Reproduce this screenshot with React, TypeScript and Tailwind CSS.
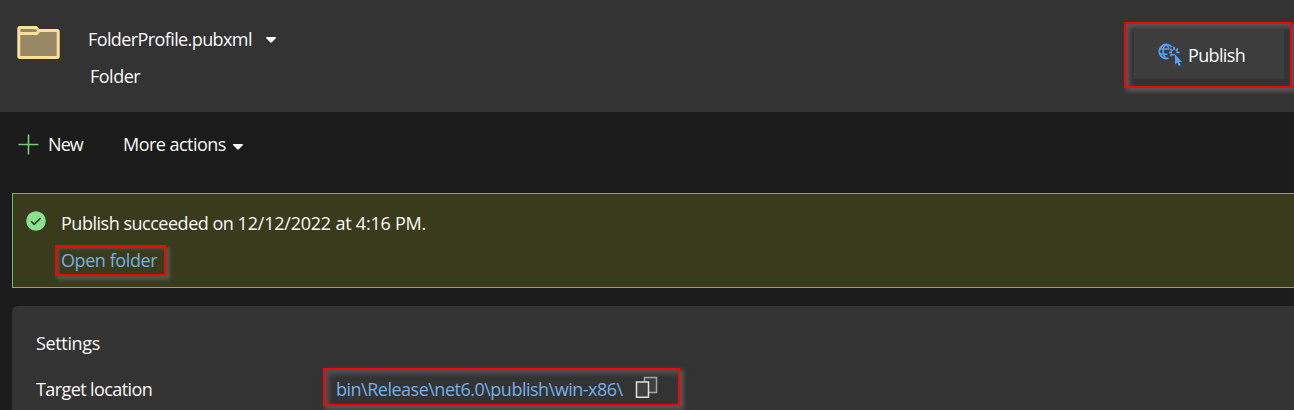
import type { ReactNode } from "react";

function Caret({ className = "" }: { className?: string }) {
  return (
    <svg className={`shrink-0 ${className}`} width="10" height="6" viewBox="0 0 10 6" fill="#fff">
      <path d="M0 0h10v1L5.6 5.6h-1.2L0 1z" />
    </svg>
  );
}

function FolderIcon() {
  return (
    <svg className="mt-[25px] ml-[17px] shrink-0" width="43" height="35" viewBox="0 0 43 35" fill="none">
      <path d="M3 2.5h16l3 3h18a1.2 1.2 0 0 1 1.2 1.2v24.6a1.2 1.2 0 0 1-1.2 1.2H3a1.2 1.2 0 0 1-1.2-1.2V3.7A1.2 1.2 0 0 1 3 2.5z" fill="#988866" stroke="#ffe09b" strokeWidth="3" />
      <path d="M2 8.5h17.5l3-3" stroke="#ffe09b" strokeWidth="3" />
    </svg>
  );
}

function GlobeCursorIcon() {
  return (
    <svg className="shrink-0" width="24" height="24" viewBox="0 0 24 24" fill="none" stroke="#55a3f4" strokeWidth="1.5">
      <path d="M13.8 4A7 7 0 1 0 10.500 15.200" strokeWidth="1.9" />
      <path d="M8 1.500C5.900 3.200 5 5.600 5 8.500s.9 5.300 3 7M8 1.500c1.500 1 2.400 2.400 2.900 4M1.500 6h10M1.500 11.200h8" />
      <path d="M16 3.800v3M16 11v1.500M11 9.400h3M18.400 9.400h3.200M12.400 5.800l2 2M19.900 5.800l-2.100 2M12.400 13l2-2" strokeWidth="1.900" />
      <path d="M17 11.300v10.200l2.200-2 1.500 3.500 1.900-.8-1.500-3.300h2.900z" fill="#55a3f4" stroke="none" />
    </svg>
  );
}

function CopyIcon() {
  return (
    <svg className="ml-[11px] mt-[-1px] shrink-0" width="24" height="24" viewBox="0 0 24 24" fill="none">
      <path d="M9.500 1.500h12v15h-12z" fill="#3f3f3f" stroke="#a5a5a5" strokeWidth="1.500" />
      <path d="M1.500 6h12v15.200h-12z" fill="#404040" stroke="#e0e0e0" strokeWidth="1.500" />
    </svg>
  );
}

function Highlight({ className, children }: { className: string; children: ReactNode }) {
  return (
    <div className={`flex shrink-0 border-2 border-[#fb0000] ${className}`}>
      {children}
    </div>
  );
}

export default function App() {
  return (
    <div className="flex h-[410px] w-full flex-col overflow-hidden bg-[#1b1b1b] font-['Open_Sans',sans-serif] text-[18px] leading-6 whitespace-nowrap text-[#fafafa]">
      <header className="flex h-[112px] shrink-0 items-start bg-[#333333]">
        <FolderIcon />
        <div className="ml-[28px] flex flex-col pt-[27px]">
          <div className="flex items-center">
            <span className="w-[164px] tracking-[-0.6px]">FolderProfile.pubxml</span>
            <Caret className="mt-[2px] ml-[14px]" />
          </div>
          <span className="mt-[13px] ml-[2px] tracking-[-0.5px]">Folder</span>
        </div>
        <Highlight className="mt-[22px] ml-auto mr-[2px] h-[66px] w-[168px] pt-[6px] pl-2 shadow-[3px_3px_4px_1px_#555555,inset_3px_3px_4px_1px_#555555]">
          <button className="flex h-[49px] w-[150px] items-start bg-[#3d3d3d] pt-[13px] pl-6 text-left">
            <GlobeCursorIcon />
            <span className="ml-[6px] tracking-[-0.65px]">Publish</span>
          </button>
        </Highlight>
      </header>

      <nav className="flex h-[81px] shrink-0 items-start pt-5 pl-[18px]">
        <svg className="mt-[2px] shrink-0" width="21" height="21" viewBox="0 0 21 21" stroke="#78cb7c" strokeWidth="1.600">
          <path d="M.5 10.500h20M10.500.5v20" />
        </svg>
        <span className="ml-[9px] w-[75px] tracking-[-0.9px]">New</span>
        <span className="w-[103px] tracking-[-0.53px]">More actions</span>
        <Caret className="mt-[12px] ml-[7px]" />
      </nav>

      <section className="ml-3 flex h-[95px] shrink-0 items-start border border-r-0 border-[#67bd57] bg-[#3a3b1c] pt-[17px] pl-[13px]">
        <svg className="shrink-0" width="20" height="20" viewBox="0 0 20 20" fill="none">
          <circle cx="10" cy="10" r="9.800" fill="#89e28b" />
          <path d="M5.200 10.300l3 3 6.500-6.300" stroke="#253923" strokeWidth="1.600" />
        </svg>
        <div className="ml-[9px] flex flex-col">
          <p className="ml-[6px] tracking-[-0.48px]">
            Publish succeeded on <time className="tracking-[-0.22px]">12/12/2022 at 4:16 PM.</time>
          </p>
          <Highlight className="mt-[10px] h-[31px] w-[111px] pt-px pl-1 shadow-[3px_3px_3px_1px_#555547,inset_2px_2px_3px_0px_#555547]">
            <a className="tracking-[-0.42px] text-[#75b0e6]">Open folder</a>
          </Highlight>
        </div>
      </section>

      <section className="mt-[18px] ml-3 flex h-[104px] shrink-0 flex-col rounded-tl-[6px] bg-[#333333] pt-[25px] pl-6">
        <h2 className="tracking-[-0.35px]">Settings</h2>
        <div className="mt-[13px] flex items-start">
          <span className="mt-[9px] w-[287px] tracking-[-0.6px]">Target location</span>
          <Highlight className="h-[38px] w-[357px] pt-[7px] pl-[11px] shadow-[3px_3px_4px_1px_#555555,inset_3px_3px_4px_1px_#505050]">
            <a className="w-[288px] tracking-[-0.5px] text-[#75b0e6]">bin\Release\net6.0\publish\win-x86\</a>
            <CopyIcon />
          </Highlight>
        </div>
      </section>
    </div>
  );
}
